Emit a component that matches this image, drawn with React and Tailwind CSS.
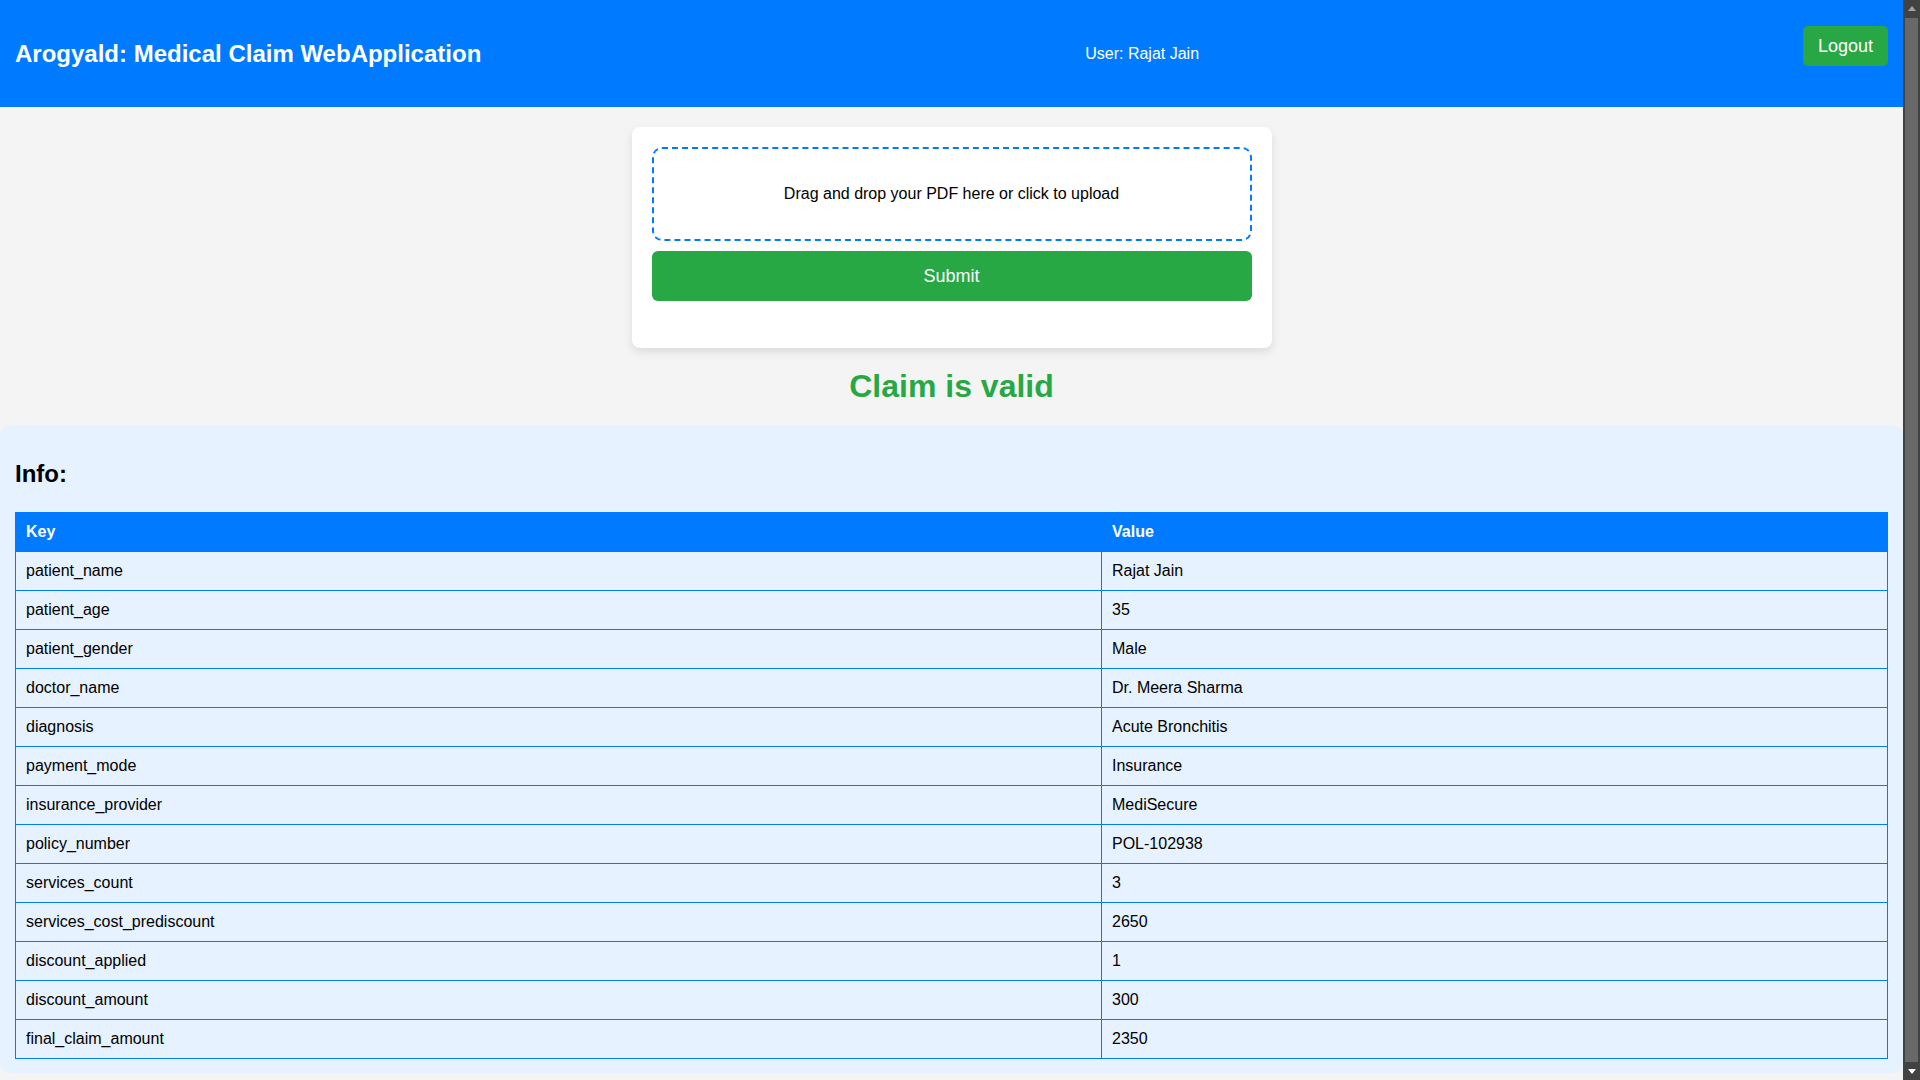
import React from 'react';

const rows = [
  ['patient_name', 'Rajat Jain'],
  ['patient_age', '35'],
  ['patient_gender', 'Male'],
  ['doctor_name', 'Dr. Meera Sharma'],
  ['diagnosis', 'Acute Bronchitis'],
  ['payment_mode', 'Insurance'],
  ['insurance_provider', 'MediSecure'],
  ['policy_number', 'POL-102938'],
  ['services_count', '3'],
  ['services_cost_prediscount', '2650'],
  ['discount_applied', '1'],
  ['discount_amount', '300'],
  ['final_claim_amount', '2350'],
];

// Browser scrollbar as seen in the screenshot
function Scrollbar() {
  return (
    <div className="w-[17px] shrink-0 bg-[#424242] flex flex-col">
      <div className="h-[17px] flex items-center justify-center">
        <svg width="8" height="5" viewBox="0 0 8 5"><polygon points="4,0 8,5 0,5" fill="#a3a3a3" /></svg>
      </div>
      <div className="flex-1 px-[2px] py-[1px]">
        <div className="h-full bg-[#686868]" />
      </div>
      <div className="h-[17px] flex items-center justify-center">
        <svg width="8" height="5" viewBox="0 0 8 5"><polygon points="0,0 8,0 4,5" fill="#ffffff" /></svg>
      </div>
    </div>
  );
}

export default function App() {
  return (
    <div className="h-screen flex bg-[#f4f4f4] font-['Liberation_Sans',Arial,sans-serif] text-black">
      <div className="flex-1 min-w-0 overflow-y-auto">
        {/* Header */}
        <header className="h-[107px] bg-[#007bff] text-white flex items-center justify-between px-[15px]">
          <h1 className="text-[24px] font-bold leading-[28px]">Arogyald: Medical Claim WebApplication</h1>
          <p className="text-[16px]">User: Rajat Jain</p>
          <button className="mb-4 bg-[#28a745] text-white text-[18px] leading-[20px] px-[15px] py-[10px] rounded-[5px]">
            Logout
          </button>
        </header>

        {/* Upload card */}
        <div className="w-[640px] mx-auto mt-[20px] bg-white rounded-[8px] shadow-[0_4px_10px_rgba(0,0,0,0.1)] pt-[20px] px-[20px] pb-[47px]">
          <div className="border-2 border-dashed border-[#007bff] rounded-[10px] py-[36px] text-center text-[16px] leading-[18px] cursor-pointer">
            Drag and drop your PDF here or click to upload
          </div>
          <button className="mt-[10px] w-full h-[50px] bg-[#28a745] text-white text-[18px] rounded-[6px]">
            Submit
          </button>
        </div>

        <h2 className="mt-[20px] mb-[20px] text-center text-[32px] leading-[37px] font-bold text-[#28a745]">
          Claim is valid
        </h2>

        {/* Info section */}
        <section className="bg-[#e6f2ff] rounded-[10px] px-[15px] pt-[15px] pb-[14px] mb-[20px]">
          <h2 className="mt-[20px] mb-[24px] text-[24px] leading-[28px] font-bold">Info:</h2>
          <table className="w-full border-collapse text-[16px] leading-[18px]">
            <thead>
              <tr className="bg-[#007bff] text-white">
                <th className="w-[1086px] text-left font-bold p-[10px] border border-[#007bff]">Key</th>
                <th className="text-left font-bold p-[10px] border border-[#007bff]">Value</th>
              </tr>
            </thead>
            <tbody>
              {rows.map(([k, v]) => (
                <tr key={k}>
                  <td className="p-[10px] border border-[#007bff]">{k}</td>
                  <td className="p-[10px] border border-[#007bff]">{v}</td>
                </tr>
              ))}
            </tbody>
          </table>
        </section>
      </div>
      <Scrollbar />
    </div>
  );
}
